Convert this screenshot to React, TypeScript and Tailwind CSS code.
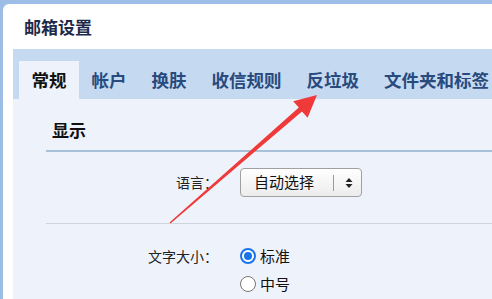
const tabs = ["常规", "帐户", "换肤", "收信规则", "反垃圾", "文件夹和标签"];

function Radio({ checked }: { checked?: boolean }) {
  return checked ? (
    <span className="w-[16px] h-[16px] rounded-full border-2 border-[#1a73e8] bg-white flex items-center justify-center">
      <span className="w-[8px] h-[8px] rounded-full bg-[#1a73e8]" />
    </span>
  ) : (
    <span className="w-[16px] h-[16px] rounded-full border border-[#767676] bg-white" />
  );
}

export default function App() {
  return (
    <div
      className="relative w-[492px] h-[299px] overflow-hidden bg-[#9dbde6] pt-[4px] pl-[3px]"
      style={{ fontFamily: '"Noto Sans CJK SC", "Noto Sans", sans-serif' }}
    >
      <div className="h-full bg-white rounded-tl-[6px] flex flex-col">
        {/* title */}
        <div className="h-[45px] pl-[21px] flex items-center text-[17px] font-bold text-[#1c2a4a]">
          邮箱设置
        </div>

        <div className="flex-1 pl-[10px] flex flex-col">
          {/* tab bar */}
          <div className="h-[50px] bg-[#c5d9f1] flex items-end pl-[6px] whitespace-nowrap">
            {tabs.map((t, i) => (
              <div
                key={t}
                className={
                  i === 0
                    ? "h-[38px] px-[12.5px] flex items-center text-[17.5px] font-bold text-[#111] bg-[#eef3fb]"
                    : "h-[38px] px-[12.5px] flex items-center text-[17.5px] font-bold text-[#284a7d]"
                }
              >
                {t}
              </div>
            ))}
          </div>

          {/* content */}
          <div className="flex-1 bg-[#eef3fb] pl-[33px]">
            <div className="pt-[21px] pb-[10px] pl-[6px] leading-[20px] text-[17px] font-bold text-[#111] border-b-2 border-[#a9c0d9]">
              显示
            </div>

            <div className="flex items-center pt-[16px] pb-[26px] border-b border-[#cdd5df]">
              <div className="w-[172px] text-right text-[14px] text-[#222]">语言：</div>
              <div className="ml-[22px] w-[122px] h-[29px] rounded-[4px] border border-[#a0a0a0] bg-gradient-to-b from-white to-[#ececec] flex items-center">
                <span className="pl-[13px] w-[92px] text-[15px] text-[#111]">自动选择</span>
                <span className="w-px h-[16px] bg-[#9a9a9a]" />
                <svg className="ml-[11px]" width="8" height="12" viewBox="0 0 8 12">
                  <path d="M4 1 L7.5 5 H0.5 Z" fill="#222" />
                  <path d="M4 11 L7.5 7 H0.5 Z" fill="#222" />
                </svg>
              </div>
            </div>

            <div className="flex pt-[18px]">
              <div className="w-[172px] h-[28px] flex items-center justify-end text-[14px] text-[#222]">
                文字大小：
              </div>
              <div className="ml-[22px] flex flex-col">
                <div className="h-[28px] flex items-center gap-[4px] text-[15px] text-[#111]">
                  <Radio checked />
                  标准
                </div>
                <div className="h-[28px] flex items-center gap-[4px] text-[15px] text-[#111]">
                  <Radio />
                  中号
                </div>
              </div>
            </div>
          </div>
        </div>
      </div>

      {/* red annotation arrow */}
      <svg className="absolute left-0 top-0 pointer-events-none" width="492" height="299" viewBox="0 0 492 299">
        <polygon
          points="317,95 307.6,117.8 302,111.4 170.5,223.6 169.5,222.4 298.8,107.6 293.2,101.2"
          fill="#f03a3a"
        />
      </svg>
    </div>
  );
}
